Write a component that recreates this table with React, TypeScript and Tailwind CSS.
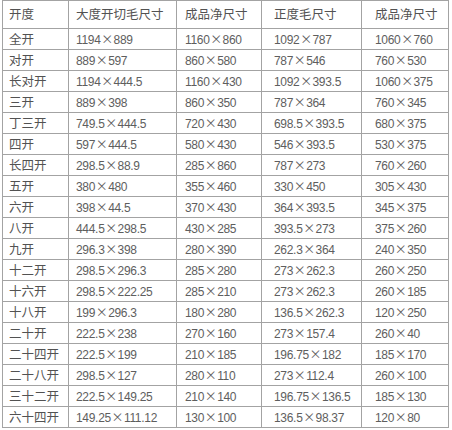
const headers = ["开度", "大度开切毛尺寸", "成品净尺寸", "正度毛尺寸", "成品净尺寸"];

const rows: string[][] = [
  ["全开", "1194×889", "1160×860", "1092×787", "1060×760"],
  ["对开", "889×597", "860×580", "787×546", "760×530"],
  ["长对开", "1194×444.5", "1160×430", "1092×393.5", "1060×375"],
  ["三开", "889×398", "860×350", "787×364", "760×345"],
  ["丁三开", "749.5×444.5", "720×430", "698.5×393.5", "680×375"],
  ["四开", "597×444.5", "580×430", "546×393.5", "530×375"],
  ["长四开", "298.5×88.9", "285×860", "787×273", "760×260"],
  ["五开", "380×480", "355×460", "330×450", "305×430"],
  ["六开", "398×44.5", "370×430", "364×393.5", "345×375"],
  ["八开", "444.5×298.5", "430×285", "393.5×273", "375×260"],
  ["九开", "296.3×398", "280×390", "262.3×364", "240×350"],
  ["十二开", "298.5×296.3", "285×280", "273×262.3", "260×250"],
  ["十六开", "298.5×222.25", "285×210", "273×262.3", "260×185"],
  ["十八开", "199×296.3", "180×280", "136.5×262.3", "120×250"],
  ["二十开", "222.5×238", "270×160", "273×157.4", "260×40"],
  ["二十四开", "222.5×199", "210×185", "196.75×182", "185×170"],
  ["二十八开", "298.5×127", "280×110", "273×112.4", "260×100"],
  ["三十二开", "222.5×149.25", "210×140", "196.75×136.5", "185×130"],
  ["六十四开", "149.25×111.12", "130×100", "136.5×98.37", "120×80"],
];

const widths = ["w-[66px]", "w-[108px]", "w-[85px]", "w-[100px]", "w-[87px]"];
const pads = ["pl-[6px]", "pl-[7px]", "pl-[8px]", "pl-[12px]", "pl-[13px]"];

// the × sign sits in a full-width cell in the source image
function fmt(s: string) {
  const parts = s.split("×");
  if (parts.length < 2) return s;
  return (
    <>
      {parts[0]}
      <span className="inline-block w-[13px] text-center text-[12px] font-['Noto_Sans_CJK_SC',sans-serif]">×</span>
      {parts[1]}
    </>
  );
}

export default function App() {
  return (
    <div className="w-[452px] h-[430px] bg-white overflow-hidden">
      <table className="ml-[2px] border-collapse table-fixed w-[446px] text-[#525252]">
        <colgroup>
          {widths.map((w, i) => (
            <col key={i} className={w} />
          ))}
        </colgroup>
        <thead>
          <tr className="h-[28px]">
            {headers.map((h, i) => (
              <th
                key={i}
                className={`border border-[#a3a3a3] text-left font-normal text-[12.5px] whitespace-nowrap ${pads[i]} font-['Noto_Sans_CJK_SC',sans-serif]`}
              >
                {h}
              </th>
            ))}
          </tr>
        </thead>
        <tbody>
          {rows.map((r, ri) => (
            <tr key={ri} className="h-[21px]">
              {r.map((c, ci) => (
                <td
                  key={ci}
                  className={`border border-[#a3a3a3] p-0 leading-none whitespace-nowrap ${pads[ci]} ${
                    ci === 0
                      ? "text-[12.5px] font-['Noto_Sans_CJK_SC',sans-serif]"
                      : "text-[12px] tracking-[-0.3px] font-['Liberation_Sans','Noto_Sans_CJK_SC',sans-serif] text-[#5e5e5e]"
                  }`}
                >
                  {ci === 0 ? c : fmt(c)}
                </td>
              ))}
            </tr>
          ))}
        </tbody>
      </table>
    </div>
  );
}
